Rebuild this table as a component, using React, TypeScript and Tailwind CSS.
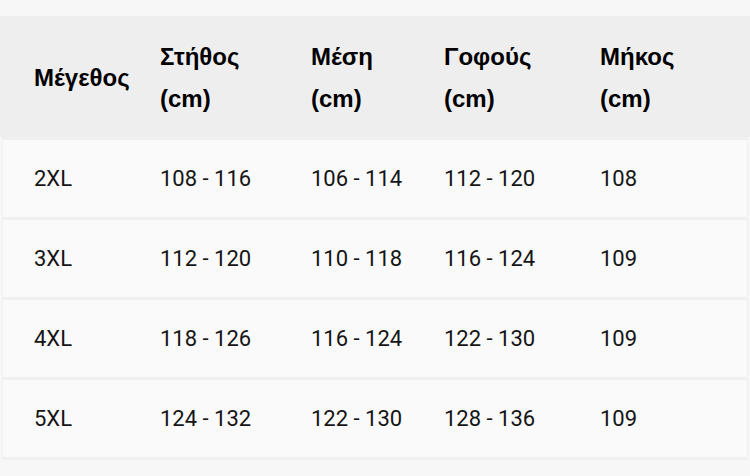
const rows = [
  ["2XL", "108 - 116", "106 - 114", "112 - 120", "108"],
  ["3XL", "112 - 120", "110 - 118", "116 - 124", "109"],
  ["4XL", "118 - 126", "116 - 124", "122 - 130", "109"],
  ["5XL", "124 - 132", "122 - 130", "128 - 136", "109"],
];

const cols = "grid grid-cols-[126px_151px_133px_156px_1fr]";

export default function App() {
  return (
    <div className="min-h-[476px] w-[750px] bg-[#f7f7f7] pt-[16px]">
      <div className={`${cols} pl-[34px] pt-[2px] items-center bg-[#eeeeee] h-[121px] text-[24px] font-bold leading-[42px] text-black`} style={{ fontFamily: '"Liberation Sans", Arial, sans-serif' }}>
        <div>Μέγεθος</div>
        <div>Στήθος<br />(cm)</div>
        <div>Μέση<br />(cm)</div>
        <div>Γοφούς<br />(cm)</div>
        <div>Μήκος<br />(cm)</div>
      </div>
      <div className="mx-[2px] border-b-[3px] border-[#f0f0f0]" style={{ fontFamily: 'Roboto, "Liberation Sans", sans-serif' }}>
        {rows.map((r) => (
          <div key={r[0]} className={`${cols} pl-[31px] h-[80px] items-center bg-[#fafafa] border-x border-t-[3px] border-[#f0f0f0] text-[22px] text-[#151515]`}>
            {r.map((c, i) => (
              <div key={i}>{c}</div>
            ))}
          </div>
        ))}
      </div>
    </div>
  );
}
